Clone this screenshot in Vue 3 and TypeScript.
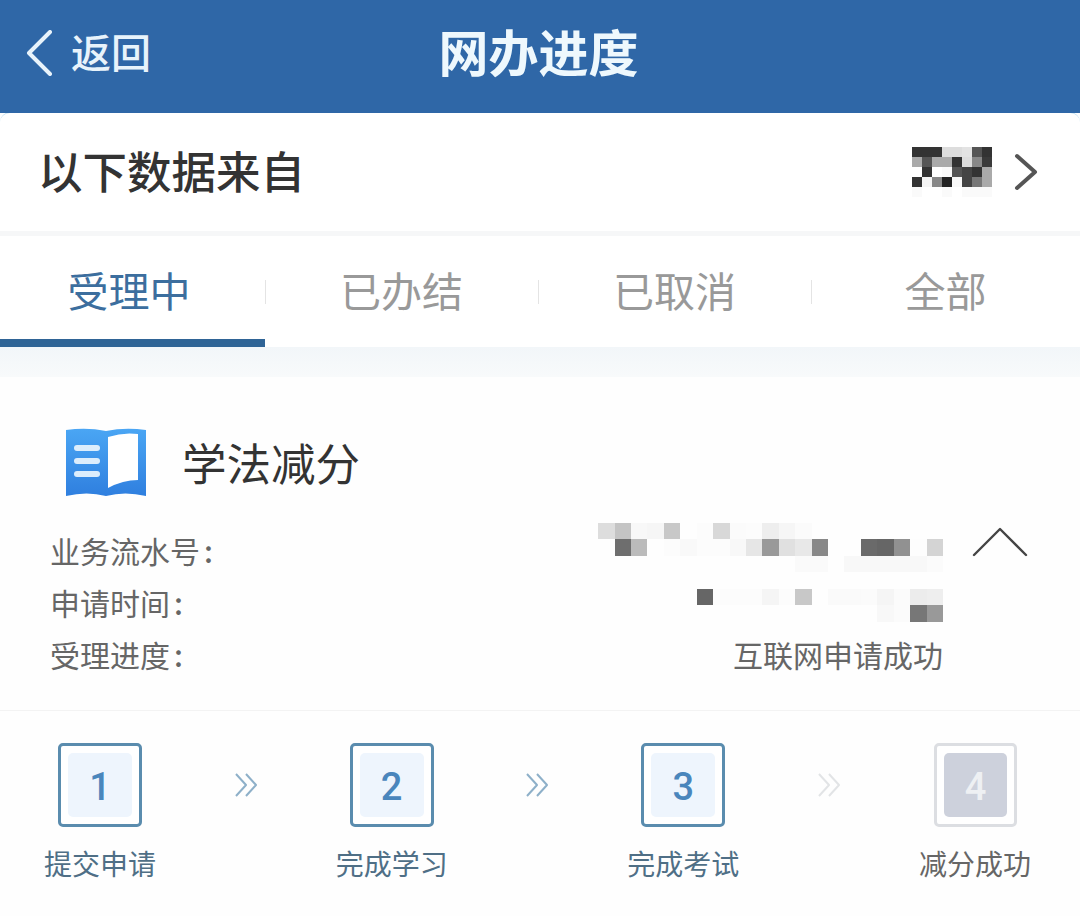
<script setup lang="ts">
const tabs = ['受理中', '已办结', '已取消', '全部']

const toCells = (rows: string[][]) =>
  rows.flat().map((c) => '#' + c)

const logoMosaic = toCells([
  ['333', '333', '333', 'ddd', 'ddd', 'e3e3e3', '555', '333'],
  ['aaa', '555', 'aaa', 'aaa', '333', 'ddd', '888', '3a3a3a'],
  ['fff', '333', 'fff', 'fafafa', '555', '444', '333', 'aaa'],
  ['333', 'f5f5f5', '888', '222', 'f8f8f8', '444', '777', 'aaa'],
  ['fafafa', 'fff', 'fff', 'fafafa', 'fff', 'fafafa', 'fafafa', 'fafafa'],
])

const f = 'fefefe'
const serialMosaic = toCells([
  ['ddd', 'c4c4c4', 'f8f8f8', 'f6f6f6', 'c8c8c8', f, 'fcfcfc', 'd8d8d8', 'fbfbfb', 'fcfcfc', 'eee', 'f6f6f6', 'fbfbfb', f, f, f, f, f, f, f, f],
  [f, '6e6e6e', 'bbb', f, 'fcfcfc', 'f9f9f9', 'fcfcfc', 'fcfcfc', 'f8f8f8', 'e6e6e6', '999', 'e0e0e0', 'e8e8e8', '888', f, f, '6a6a6a', '666', '919191', 'fdfdfd', 'd4d4d4'],
  [f, f, f, f, f, f, f, f, f, f, f, f, 'fafafa', 'fafafa', f, 'f8f8f8', 'f8f8f8', 'f8f8f8', 'f8f8f8', 'f8f8f8', 'fbfbfb'],
])

const timeMosaic = toCells([
  ['666', 'fcfcfc', 'fcfcfc', 'fcfcfc', 'f5f5f5', 'fcfcfc', 'c8c8c8', f, 'fafafa', 'fafafa', 'fbfbfb', 'f5f5f5', 'fbfbfb', 'ececec', 'eee'],
  [f, f, f, f, f, f, f, f, f, f, f, 'f8f8f8', 'fbfbfb', '777', '999'],
])

const steps = [
  { n: 1, label: '提交申请', done: true },
  { n: 2, label: '完成学习', done: true },
  { n: 3, label: '完成考试', done: true },
  { n: 4, label: '减分成功', done: false },
]
</script>

<template>
  <div class="page">
    <header class="topbar">
      <div class="back">
        <svg class="back-icon" width="28" height="46" viewBox="0 0 28 46" fill="none">
          <path d="M25 2 L4 23 L25 44" stroke="#e8f3fb" stroke-width="4" stroke-linecap="round" stroke-linejoin="round" />
        </svg>
        <span>返回</span>
      </div>
      <h1 class="title">网办进度</h1>
    </header>

    <section class="source">
      <span class="source-text">以下数据来自</span>
      <div class="source-right">
        <div class="mosaic logo-mosaic">
          <i v-for="(c, i) in logoMosaic" :key="i" :style="{ background: c }"></i>
        </div>
        <svg width="24" height="38" viewBox="0 0 24 38" fill="none">
          <path d="M3 3 L21 19 L3 35" stroke="#555" stroke-width="4" stroke-linecap="round" stroke-linejoin="round" />
        </svg>
      </div>
    </section>

    <nav class="tabs">
      <div v-for="(t, i) in tabs" :key="t" class="tab" :class="{ active: i === 0 }">{{ t }}</div>
    </nav>

    <div class="band"></div>

    <section class="card">
      <div class="card-head">
        <svg class="book" width="82" height="70" viewBox="0 0 82 70">
          <defs>
            <linearGradient id="bookGrad" x1="0" y1="0" x2="0" y2="1">
              <stop offset="0" stop-color="#4aa6f4" />
              <stop offset="1" stop-color="#2f7fdf" />
            </linearGradient>
          </defs>
          <path d="M1 3 Q22 0 41 4 Q60 0 81 3 V69 Q60 64 41 69 Q22 64 1 69 Z" fill="url(#bookGrad)" />
          <path d="M43 10 Q58 5 73 7 V53 Q58 53 43 61 Z" fill="#fff" />
          <rect x="9" y="18" width="26" height="6" rx="3" fill="#dcedfc" />
          <rect x="9" y="31" width="26" height="6" rx="3" fill="#dcedfc" />
          <rect x="9" y="44" width="26" height="6" rx="3" fill="#dcedfc" />
        </svg>
        <h2 class="card-title">学法减分</h2>
      </div>

      <div class="info">
        <div class="info-rows">
          <div class="row">
            <span>业务流水号<i class="colon">:</i></span>
            <div class="mosaic serial"><i v-for="(c, i) in serialMosaic" :key="i" :style="{ background: c }"></i></div>
          </div>
          <div class="row">
            <span>申请时间<i class="colon">:</i></span>
            <div class="mosaic time"><i v-for="(c, i) in timeMosaic" :key="i" :style="{ background: c }"></i></div>
          </div>
          <div class="row">
            <span>受理进度<i class="colon">:</i></span>
            <span>互联网申请成功</span>
          </div>
        </div>
        <svg class="collapse" width="56" height="30" viewBox="0 0 56 30" fill="none">
          <path d="M2 28 L28 2 L54 28" stroke="#444" stroke-width="2.4" stroke-linecap="round" stroke-linejoin="round" />
        </svg>
      </div>

      <div class="steps">
        <template v-for="(s, i) in steps" :key="s.n">
          <div class="step" :class="{ pending: !s.done }">
            <div class="box"><b>{{ s.n }}</b></div>
            <span class="step-label">{{ s.label }}</span>
          </div>
          <svg v-if="i < 3" class="arrow" :class="{ faint: i === 2 }" width="24" height="26" viewBox="0 0 24 26" fill="none">
            <path d="M2 2 L12 13 L2 24 M12 2 L22 13 L12 24" stroke-width="2" stroke-linejoin="round" />
          </svg>
        </template>
      </div>
    </section>
  </div>
</template>

<style>
html, body { margin: 0; background: #fefefe; }
</style>

<style scoped>
.page {
  width: 1080px;
  height: 916px;
  overflow: hidden;
  background: #fefefe;
  font-family: "Noto Sans CJK SC", "Noto Sans", sans-serif;
}
.topbar {
  height: 113px;
  background: #2f67a7;
  display: flex;
  align-items: center;
  justify-content: center;
  position: relative;
  color: #e8f3fb;
}
.back {
  position: absolute;
  left: 25px;
  top: 30px;
  display: flex;
  align-items: center;
  gap: 18px;
  font-size: 40px;
  font-weight: 500;
  line-height: 46px;
}
.back span {
  margin-top: -4px;
}
.title {
  margin: 0;
  font-size: 50px;
  font-weight: 700;
  line-height: 1;
  padding: 0 3px 14px 0;
  color: #eef8fd;
}
.source {
  height: 119px;
  background: #fff;
  border-radius: 10px 10px 0 0;
  margin-top: -1px;
  border-top: 1px solid #bfe0f2;
  box-sizing: border-box;
  display: flex;
  align-items: center;
  justify-content: space-between;
  padding: 0 42px 0 38px;
}
.source-text {
  font-size: 44.5px;
  font-weight: 500;
  color: #333;
  margin-top: -6px;
}
.source-right {
  display: flex;
  align-items: center;
  gap: 22px;
}
.mosaic {
  display: grid;
}
.mosaic i {
  display: block;
}
.logo-mosaic {
  grid-template-columns: repeat(8, 10px);
  grid-auto-rows: 10px;
}
.tabs {
  margin-top: 5px;
  height: 111px;
  background: #fff;
  display: grid;
  grid-template-columns: 265px 273px 273px 1fr;
  box-shadow: 0 -5px 0 #f6f7f8;
}
.tab {
  display: flex;
  align-items: center;
  justify-content: center;
  font-size: 41px;
  color: #999;
  padding-bottom: 5px;
  box-sizing: border-box;
  position: relative;
}
.tab + .tab::before {
  content: "";
  position: absolute;
  left: 0;
  top: 44px;
  height: 24px;
  width: 1px;
  background: #e4e4e4;
}
.tab.active {
  color: #3c6e9e;
  border-bottom: 8px solid #2f6496;
  padding: 3px 7px 0 0;
}
.band {
  height: 30px;
  background: linear-gradient(#f2f6f9, #f8fafb);
}
.card-head {
  display: flex;
  align-items: center;
  gap: 35px;
  padding: 50px 0 0 65px;
}
.card-title {
  margin: 0;
  font-size: 44.5px;
  font-weight: 400;
  line-height: 70px;
  color: #333;
}
.info {
  display: flex;
  margin-top: 27px;
  height: 187px;
  border-bottom: 1px solid #f3f3f3;
  box-sizing: border-box;
}
.info-rows {
  width: 893px;
  margin-left: 50px;
  flex: none;
}
.row {
  height: 52px;
  display: flex;
  justify-content: space-between;
  align-items: flex-start;
  font-size: 30px;
  line-height: 52px;
  color: #666;
}
.colon {
  font-style: normal;
  font-weight: 500;
  margin-left: 4px;
}
.serial {
  grid-template-columns: repeat(21, 16.43px);
  grid-auto-rows: 16.43px;
  margin-top: -1px;
}
.time {
  grid-template-columns: repeat(15, 16.43px);
  grid-auto-rows: 16.43px;
  margin-top: 13px;
}
.collapse {
  margin: 3px 0 0 29px;
}
.steps {
  display: flex;
  justify-content: space-between;
  padding: 32px 45px 0 40px;
}
.step {
  width: 120px;
  display: flex;
  flex-direction: column;
  align-items: center;
}
.box {
  width: 84px;
  height: 84px;
  box-sizing: border-box;
  border: 3px solid #5a8cae;
  border-radius: 5px;
  padding: 7px;
  background: #fff;
}
.box b {
  display: flex;
  width: 100%;
  height: 100%;
  align-items: center;
  justify-content: center;
  box-sizing: border-box;
  padding-top: 3px;
  border-radius: 5px;
  background: #eef5fd;
  color: #4a86bc;
  font-family: "Roboto", "Noto Sans", sans-serif;
  font-size: 38px;
  font-weight: 500;
}
.pending .box {
  width: 83px;
  margin-left: 1px;
  border-color: #dcdee2;
}
.pending .box b {
  background: #cdd1dc;
  color: #eef0f3;
}
.step-label {
  margin-top: 16px;
  font-size: 28px;
  line-height: 40px;
  white-space: nowrap;
  color: #4f6f86;
}
.pending .step-label {
  color: #666;
}
.arrow {
  margin-top: 29px;
  stroke: #8eb0c9;
}
.arrow.faint {
  stroke: #e2e4e6;
}
</style>
